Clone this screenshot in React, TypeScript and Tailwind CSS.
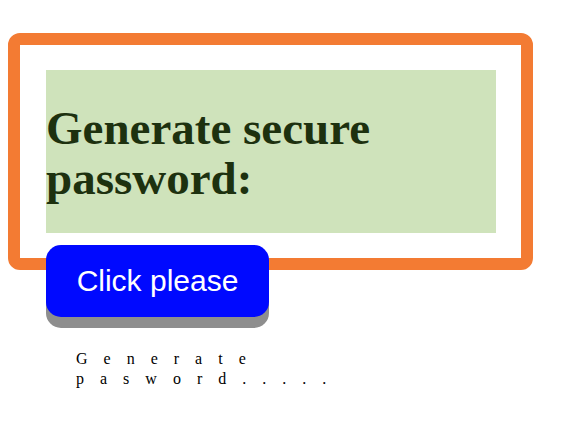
import React from "react";

export default function App() {
  return (
    <div className="min-h-screen bg-white pt-[33px] pl-[8px] pb-8">
      <div className="w-[525px] rounded-[12px] border-[12px] border-[#f37b33] pt-[25px] pb-[25px] pl-[26px]">
        <h1 className="w-[450px] bg-[#cfe3bb] pt-[33px] pb-[30px] font-['Liberation_Serif','Times_New_Roman',serif] text-[47px] leading-[50px] font-bold text-[#1d310f]">
          Generate secure password:
        </h1>
      </div>

      <button className="relative z-10 -mt-[25px] ml-[38px] block h-[72px] w-[223px] rounded-[15px] bg-[#0009ff] font-['Liberation_Sans',Arial,sans-serif] text-[30px] leading-[34px] text-white shadow-[0_11px_0_#8e8e8e]">
        Click please
      </button>

      <p className="mt-[32px] ml-[68px] w-[290px] font-['Liberation_Serif','Times_New_Roman',serif] text-[16px] leading-[20px] tracking-[16px] text-black">
        Generate pasword.....
      </p>
    </div>
  );
}
